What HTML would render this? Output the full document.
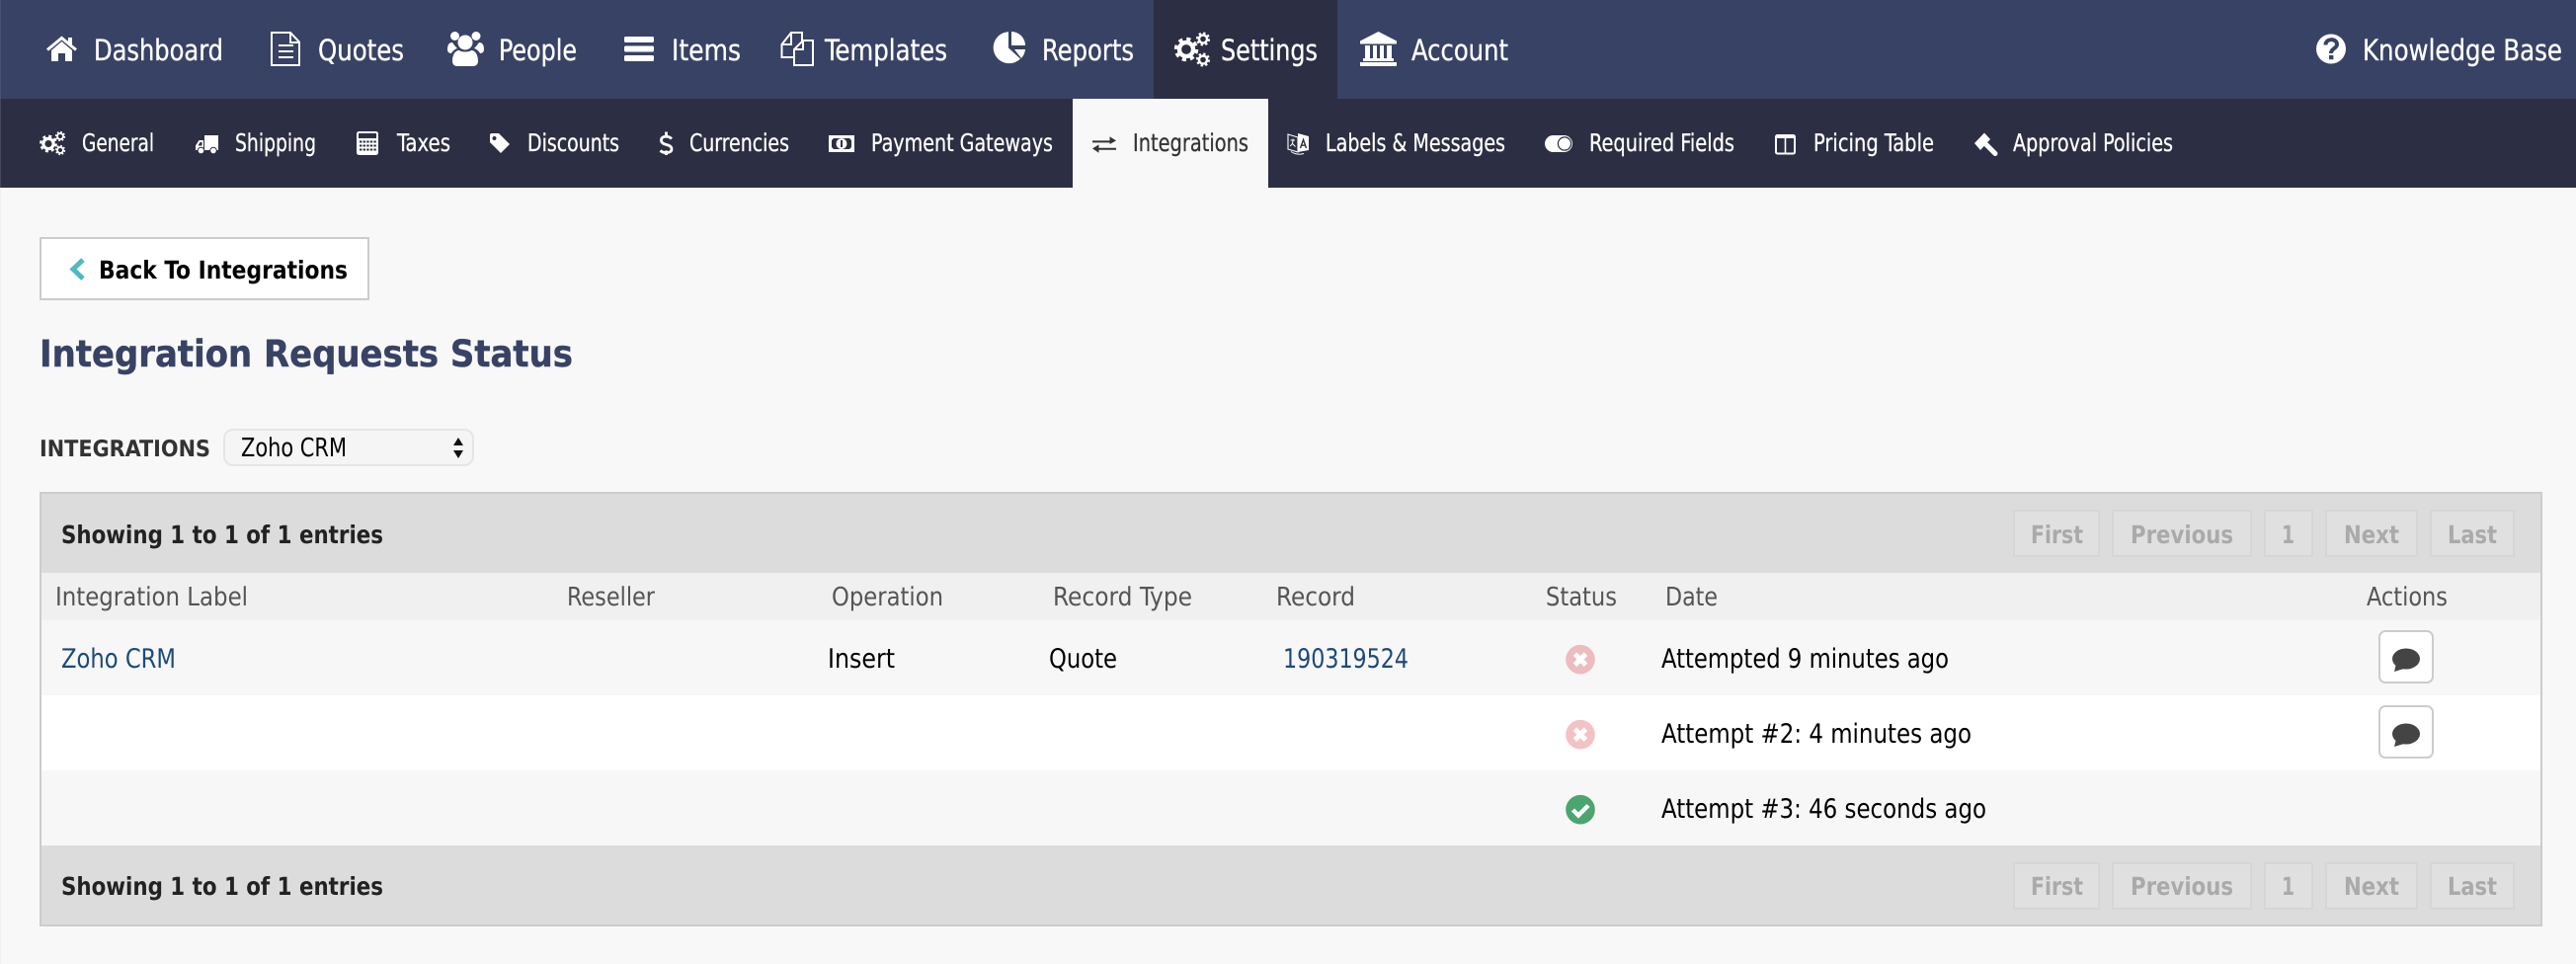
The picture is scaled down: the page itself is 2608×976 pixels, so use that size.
<!DOCTYPE html>
<html lang="en">
<head>
<meta charset="utf-8">
<title>Integration Requests Status</title>
<style>
html,body{margin:0;padding:0;width:2608px;height:976px;overflow:hidden;background:#f8f8f8}
svg{display:block}
text{font-family:"DejaVu Sans Condensed","DejaVu Sans","Liberation Sans",sans-serif;font-stretch:condensed;text-rendering:geometricPrecision}
.t{font-size:29.5px;fill:#fff;stroke:#fff;stroke-width:.3px}
.s{font-size:24.5px;fill:#fff;stroke:#fff;stroke-width:.25px}
.b{font-weight:700}
.h{font-size:26px;fill:#555}
.r{font-size:27px;fill:#000}
.l{font-size:27px;fill:#1d4a7a}
.p{font-size:25px;font-weight:700;fill:#aaa}
.w{font-size:25px;font-weight:700;fill:#222}
</style>
</head>
<body>
<svg xmlns="http://www.w3.org/2000/svg" width="2608" height="976" viewBox="0 0 2608 976">
<defs>
  <g id="gear">
    <circle r="5.4" fill="none" stroke="currentColor" stroke-width="3.3"/>
    <circle r="8" fill="none" stroke="currentColor" stroke-width="2.8" stroke-dasharray="3.14 3.14"/>
  </g>
  <g id="pg">
    <rect x="2039" y="1" width="86" height="46" fill="#e0e0e0" stroke="#d6d6d6" stroke-width="2"/>
    <rect x="2139" y="1" width="140" height="46" fill="#e0e0e0" stroke="#d6d6d6" stroke-width="2"/>
    <rect x="2293" y="1" width="48" height="46" fill="#e0e0e0" stroke="#d6d6d6" stroke-width="2"/>
    <rect x="2355" y="1" width="92" height="46" fill="#e0e0e0" stroke="#d6d6d6" stroke-width="2"/>
    <rect x="2461" y="1" width="84" height="46" fill="#e0e0e0" stroke="#d6d6d6" stroke-width="2"/>
  </g>
  <g id="bubble" fill="#444">
    <ellipse cx="2436" cy="667" rx="14" ry="10.5"/>
    <path d="M2426 672 L2424 680 L2437 676Z"/>
  </g>
  <path id="x" d="M-5.500 -5.500 L5.500 5.500 M5.500 -5.500 L-5.500 5.500" fill="none" stroke="#fff" stroke-width="5"/>
</defs>

<!-- backgrounds -->
<rect width="2608" height="976" fill="#f8f8f8"/>
<rect width="2608" height="100" fill="#384265"/>
<rect y="100" width="2608" height="90" fill="#2c2f43"/>
<rect x="1168" width="186" height="100" fill="#2c2f43"/>
<rect x="1086" y="100" width="198" height="90" fill="#f8f8f8"/>
<rect width="1" height="100" fill="#4a5272"/>
<rect y="100" width="1" height="90" fill="#45475a"/>
<rect y="190" width="1" height="786" fill="#f1f1f1"/>

<!-- top nav text -->
<text class="t" x="95" y="61" textLength="131" lengthAdjust="spacingAndGlyphs">Dashboard</text>
<text class="t" x="322" y="61" textLength="87" lengthAdjust="spacingAndGlyphs">Quotes</text>
<text class="t" x="505" y="61" textLength="79" lengthAdjust="spacingAndGlyphs">People</text>
<text class="t" x="680" y="61" textLength="70" lengthAdjust="spacingAndGlyphs">Items</text>
<text class="t" x="835" y="61" textLength="124" lengthAdjust="spacingAndGlyphs">Templates</text>
<text class="t" x="1055" y="61" textLength="93" lengthAdjust="spacingAndGlyphs">Reports</text>
<text class="t" x="1236" y="61" textLength="98" lengthAdjust="spacingAndGlyphs">Settings</text>
<text class="t" x="1429" y="61" textLength="98" lengthAdjust="spacingAndGlyphs">Account</text>
<text class="t" x="2392" y="61" textLength="202" lengthAdjust="spacingAndGlyphs">Knowledge Base</text>

<!-- top nav icons -->
<g fill="#fff">
  <path d="M52 51 L62.5 42 L73 51 V62 H66 V54 H59 V62 H52Z"/>
  <path d="M48 50.5 L62.5 38.5 L77 50.5" fill="none" stroke="#fff" stroke-width="3"/>
  <rect x="69" y="38" width="4" height="7"/>
  <g fill="none" stroke="#fff" stroke-width="2">
    <path d="M275 33 H294 L303 42.5 V66 H275Z"/>
    <path d="M294 33 V43 H303"/>
    <path d="M282 46 H297 M282 52 H297 M282 58 H297"/>
  </g>
  <circle cx="471" cy="43" r="7.5"/>
  <circle cx="460.5" cy="36.5" r="4.5"/>
  <circle cx="482" cy="36.5" r="4.5"/>
  <path d="M458 62 C458 55 461 51 465 51 C467 53 475 53 477 51 C481 51 484 55 484 62 C484 65 482 67 479 67 H463 C460 67 458 65 458 62Z"/>
  <path d="M453 50 C453 45 455 43 458 43 C460 46 461 47 463 49 C460 50 458 52 457 54 C454 54 453 52 453 50Z"/>
  <path d="M490 50 C490 45 488 43 485 43 C483 46 482 47 480 49 C483 50 485 52 486 54 C489 54 490 52 490 50Z"/>
  <rect x="632" y="37" width="30" height="6" rx="1.5"/>
  <rect x="632" y="46.5" width="30" height="6" rx="1.5"/>
  <rect x="632" y="56" width="30" height="6" rx="1.5"/>
  <g fill="none" stroke="#fff" stroke-width="2">
    <path d="M804 58 H791.5 V45 L801 33 H812 V43"/>
    <path d="M791.5 45 H801 V33"/>
    <path d="M804 66 V50 L813 41 H823 V66Z"/>
    <path d="M804 50 H813 V41"/>
  </g>
  <path d="M1021 48.5 V32.2 A16 16 0 1 0 1033 59.5Z"/>
  <path d="M1024 32 A14 14 0 0 1 1038 46 H1024Z"/>
  <path d="M1027 50 H1038 A16 16 0 0 1 1034 59Z"/>
  <use href="#gear" transform="translate(1201 50) scale(1.3)" style="color:#fff"/>
  <use href="#gear" transform="translate(1218 39.5) scale(.75)" style="color:#fff"/>
  <use href="#gear" transform="translate(1218 60.5) scale(.75)" style="color:#fff"/>
  <path d="M1395.5 32 L1414 41.5 V44.5 H1377 V41.5Z"/>
  <rect x="1382" y="46" width="5" height="13"/>
  <rect x="1390" y="46" width="4" height="13"/>
  <rect x="1397" y="46" width="4" height="13"/>
  <rect x="1404" y="46" width="5" height="13"/>
  <rect x="1380" y="59" width="31" height="3"/>
  <rect x="1377" y="63" width="37" height="4"/>
  <circle cx="2360" cy="49.5" r="15"/>
</g>
<path d="M2354.5 45.5 C2354.5 38.5 2366 38.5 2366 45 C2366 49 2360 49 2360 54" fill="none" stroke="#384265" stroke-width="4"/>
<rect x="2358" y="56" width="4.4" height="4.2" fill="#384265"/>

<!-- sub nav text -->
<text class="s" x="83" y="153" textLength="73" lengthAdjust="spacingAndGlyphs">General</text>
<text class="s" x="238" y="153" textLength="82" lengthAdjust="spacingAndGlyphs">Shipping</text>
<text class="s" x="402" y="153" textLength="54" lengthAdjust="spacingAndGlyphs">Taxes</text>
<text class="s" x="534" y="153" textLength="93" lengthAdjust="spacingAndGlyphs">Discounts</text>
<text class="s" x="698" y="153" textLength="101" lengthAdjust="spacingAndGlyphs">Currencies</text>
<text class="s" x="882" y="153" textLength="184" lengthAdjust="spacingAndGlyphs">Payment Gateways</text>
<text class="s" x="1147" y="153" textLength="117" lengthAdjust="spacingAndGlyphs" style="fill:#333;stroke:#333">Integrations</text>
<text class="s" x="1342" y="153" textLength="182" lengthAdjust="spacingAndGlyphs">Labels &amp; Messages</text>
<text class="s" x="1609" y="153" textLength="147" lengthAdjust="spacingAndGlyphs">Required Fields</text>
<text class="s" x="1836" y="153" textLength="122" lengthAdjust="spacingAndGlyphs">Pricing Table</text>
<text class="s" x="2038" y="153" textLength="162" lengthAdjust="spacingAndGlyphs">Approval Policies</text>

<!-- sub nav icons -->
<use href="#gear" transform="translate(49 145.5) scale(.95)" style="color:#fff"/>
<use href="#gear" transform="translate(61 138) scale(.55)" style="color:#fff"/>
<use href="#gear" transform="translate(61 152) scale(.55)" style="color:#fff"/>
<g fill="#fff">
  <rect x="207" y="137" width="14" height="15"/>
  <path d="M198 152 V147.500 L201.500 142 H206 V152Z"/>
  <circle cx="203.5" cy="152.500" r="3.300" stroke="#2c2f43" stroke-width="1"/>
  <circle cx="216" cy="152.500" r="3.300" stroke="#2c2f43" stroke-width="1"/>
</g>
<path d="M200.5 147.5 L202.5 144 H204.5 V147.5Z" fill="#2c2f43"/>
<rect x="362" y="134" width="20" height="22" rx="1.5" fill="none" stroke="#fff" stroke-width="2"/>
<rect x="362" y="140" width="20" height="16" fill="#fff"/>
<path d="M364 143.5 H381 M364 147.5 H381 M364 151.5 H381" stroke="#2c2f43" stroke-width="2" stroke-dasharray="2.4 1.2" fill="none"/>
<path d="M496 137 Q496 135 498 135 H505 L516 146 L507 155 L496 144Z" fill="#fff"/>
<circle cx="500.5" cy="140" r="2" fill="#2c2f43"/>
<path d="M680 140.5 C677 137.5 669.5 137 669.5 142 C669.5 148 680 145 680 151 C680 155.5 672 155.5 668.5 152.5 M674.5 133.5 V138 M674.5 152.5 V157" fill="none" stroke="#fff" stroke-width="2.8"/>
<rect x="839" y="137" width="26" height="17" fill="#fff"/>
<path d="M844 140 H860 L862 142 V149 L860 151 H844 L842 149 V142Z" fill="#2c2f43"/>
<circle cx="852" cy="145.5" r="5.4" fill="#fff"/>
<rect x="851" y="142" width="2" height="7" fill="#2c2f43"/>
<path d="M1106 142.4 H1123.5 V138.2 L1130 142.4 L1123.5 146 V144.4 H1106Z M1130 149.8 H1112.5 V146.4 L1106 150.4 L1112.5 154.8 V151.8 H1130Z" fill="#333"/>
<path d="M1304 136 L1314 139 V154 L1304 151Z" fill="none" stroke="#fff" stroke-width="1.1"/>
<path d="M1314 135 L1325 138 V152 L1314 154Z" fill="#fff"/>
<path d="M1306.5 142 H1311 M1309 140.5 V142 C1309 145 1307.5 147 1306 148 M1308 145 L1311.5 148.5" fill="none" stroke="#fff" stroke-width="1"/>
<path d="M1316.5 150 L1319.5 141.5 L1322.5 150 M1317.5 147.2 H1321.5" fill="none" stroke="#2c2f43" stroke-width="1.4"/>
<path d="M1307 153.5 Q1313 157.5 1320 155.5" fill="none" stroke="#fff" stroke-width="1"/>
<rect x="1564" y="137" width="28" height="17" rx="8.5" fill="#fff"/>
<circle cx="1584" cy="145.5" r="6.6" fill="#fff" stroke="#2c2f43" stroke-width="1.2"/>
<rect x="1798" y="137" width="19" height="18.5" rx="1.5" fill="none" stroke="#fff" stroke-width="2"/>
<path d="M1807.5 137 V155.5" stroke="#fff" stroke-width="1.6"/>
<rect x="1798" y="137" width="19" height="3" fill="#fff"/>
<path d="M1999 145 L2009 134.5 L2015 141 L2005 152Z" fill="#fff"/>
<path d="M2011 146.5 L2020 155.5" stroke="#fff" stroke-width="5" stroke-linecap="round"/>

<!-- back button -->
<rect x="41" y="241" width="332" height="62" fill="#fff" stroke="#ccc" stroke-width="2"/>
<path d="M84 263 L74 272.5 L84 282" fill="none" stroke="#4fb9c1" stroke-width="5"/>
<text class="b" font-size="25" x="100" y="282" textLength="252" lengthAdjust="spacingAndGlyphs" fill="#000">Back To Integrations</text>

<!-- title -->
<text class="b" font-size="37.500" x="40" y="371" textLength="540" lengthAdjust="spacingAndGlyphs" fill="#374265" stroke="#374265" stroke-width=".4">Integration Requests Status</text>

<!-- filter -->
<text class="b" font-size="23" x="40" y="462" textLength="173" lengthAdjust="spacingAndGlyphs" fill="#333">INTEGRATIONS</text>
<rect x="227" y="435" width="252" height="36" rx="9" fill="#f5f5f5" stroke="#e5e5e5" stroke-width="2"/>
<text font-size="26" x="244" y="462" textLength="107" lengthAdjust="spacingAndGlyphs" fill="#000">Zoho CRM</text>
<path d="M464 443 L469 451 H459Z M464 464 L469 456 H459Z" fill="#111"/>

<!-- table -->
<rect x="40" y="498" width="2534" height="440" fill="#ccc"/>
<rect x="42" y="500" width="2530" height="80" fill="#dcdcdc"/>
<rect x="42" y="580" width="2530" height="48" fill="#f0f0f0"/>
<rect x="42" y="628" width="2530" height="76" fill="#f7f7f7"/>
<rect x="42" y="704" width="2530" height="76" fill="#fff"/>
<rect x="42" y="780" width="2530" height="76" fill="#f7f7f7"/>
<rect x="42" y="856" width="2530" height="80" fill="#dcdcdc"/>

<text class="w" x="62" y="550" textLength="326" lengthAdjust="spacingAndGlyphs">Showing 1 to 1 of 1 entries</text>
<text class="w" x="62" y="906" textLength="326" lengthAdjust="spacingAndGlyphs">Showing 1 to 1 of 1 entries</text>

<use href="#pg" y="516"/>
<use href="#pg" y="873"/>
<g>
  <text class="p" x="2056" y="550" textLength="53" lengthAdjust="spacingAndGlyphs">First</text>
  <text class="p" x="2157" y="550" textLength="104" lengthAdjust="spacingAndGlyphs">Previous</text>
  <text class="p" x="2310" y="550" textLength="13" lengthAdjust="spacingAndGlyphs">1</text>
  <text class="p" x="2373" y="550" textLength="56" lengthAdjust="spacingAndGlyphs">Next</text>
  <text class="p" x="2478" y="550" textLength="50" lengthAdjust="spacingAndGlyphs">Last</text>
  <text class="p" x="2056" y="906" textLength="53" lengthAdjust="spacingAndGlyphs">First</text>
  <text class="p" x="2157" y="906" textLength="104" lengthAdjust="spacingAndGlyphs">Previous</text>
  <text class="p" x="2310" y="906" textLength="13" lengthAdjust="spacingAndGlyphs">1</text>
  <text class="p" x="2373" y="906" textLength="56" lengthAdjust="spacingAndGlyphs">Next</text>
  <text class="p" x="2478" y="906" textLength="50" lengthAdjust="spacingAndGlyphs">Last</text>
</g>

<text class="h" x="56" y="613" textLength="195" lengthAdjust="spacingAndGlyphs">Integration Label</text>
<text class="h" x="574" y="613" textLength="89" lengthAdjust="spacingAndGlyphs">Reseller</text>
<text class="h" x="842" y="613" textLength="113" lengthAdjust="spacingAndGlyphs">Operation</text>
<text class="h" x="1066" y="613" textLength="141" lengthAdjust="spacingAndGlyphs">Record Type</text>
<text class="h" x="1292" y="613" textLength="80" lengthAdjust="spacingAndGlyphs">Record</text>
<text class="h" x="1565" y="613" textLength="72" lengthAdjust="spacingAndGlyphs">Status</text>
<text class="h" x="1686" y="613" textLength="53" lengthAdjust="spacingAndGlyphs">Date</text>
<text class="h" x="2396" y="613" textLength="82" lengthAdjust="spacingAndGlyphs">Actions</text>

<text class="l" x="62" y="676" textLength="116" lengthAdjust="spacingAndGlyphs">Zoho CRM</text>
<text class="r" x="838" y="676" textLength="68" lengthAdjust="spacingAndGlyphs">Insert</text>
<text class="r" x="1062" y="676" textLength="69" lengthAdjust="spacingAndGlyphs">Quote</text>
<text class="l" x="1299" y="676" textLength="127" lengthAdjust="spacingAndGlyphs">190319524</text>
<text class="r" x="1682" y="676" textLength="291" lengthAdjust="spacingAndGlyphs">Attempted 9 minutes ago</text>
<text class="r" x="1682" y="752" textLength="314" lengthAdjust="spacingAndGlyphs">Attempt #2: 4 minutes ago</text>
<text class="r" x="1682" y="828" textLength="329" lengthAdjust="spacingAndGlyphs">Attempt #3: 46 seconds ago</text>

<!-- status icons -->
<circle cx="1600" cy="667.700" r="14.800" fill="#ecbcbf"/>
<use href="#x" transform="translate(1600 667.700)"/>
<circle cx="1600" cy="743.700" r="14.800" fill="#f3c2c5"/>
<use href="#x" transform="translate(1600 743.700)"/>
<circle cx="1600" cy="819.700" r="14.800" fill="#4aa56e"/>
<path d="M1592.500 820 L1598 825.500 L1608 815.500" fill="none" stroke="#fff" stroke-width="4.400"/>

<!-- action buttons -->
<rect x="2409" y="639" width="54" height="52" rx="6" fill="#fff" stroke="#ccc" stroke-width="2"/>
<use href="#bubble"/>
<rect x="2409" y="715" width="54" height="52" rx="6" fill="#fff" stroke="#ccc" stroke-width="2"/>
<use href="#bubble" y="76"/>
</svg>
</body>
</html>
